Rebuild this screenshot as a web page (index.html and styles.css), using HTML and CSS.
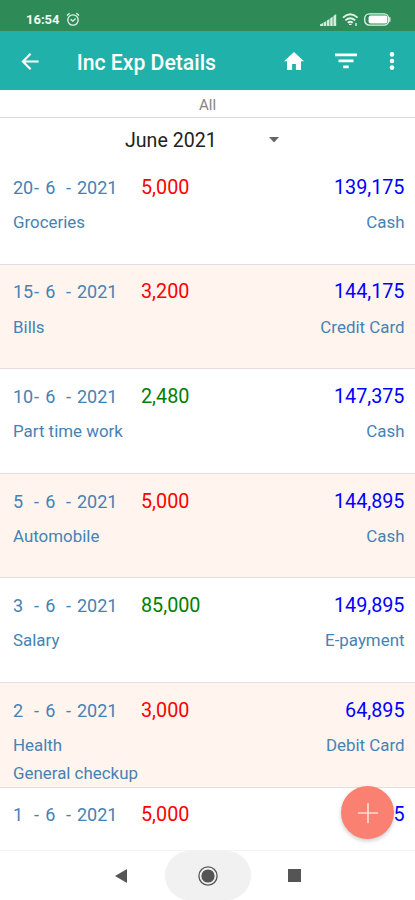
FILE: index.html
```html
<!DOCTYPE html>
<html lang="en">
<head>
    <meta charset="UTF-8">
    <meta name="viewport" content="width=device-width, initial-scale=1.0">
    <title>Inc Exp Details</title>
    <link rel="stylesheet" href="styles.css">
</head>
<body>
    <div class="screen">
        <div class="status-bar">
            <span class="time">16:54</span>
            <svg class="alarm" width="14" height="15" viewBox="0 0 14 15" fill="none" stroke="#e3f3e8" stroke-width="1.3">
                <circle cx="7" cy="8" r="5.2"/>
                <path d="M1 3.6L3.6 1.2M13 3.6L10.4 1.2M4.6 7.2L6.8 9.2L9.6 6.6"/>
            </svg>
            <div class="status-icons">
                <svg width="17" height="12" viewBox="0 0 17 12" fill="#d5ecdc">
                    <path d="M0 12V10.4L3 9V12ZM3.6 12V8.4L6.2 7.2V12ZM6.9 12V6.4L9.5 5V12ZM10.2 12V4.2L12.7 2.8V12ZM13.4 12V2L16.2 0V12Z"/>
                </svg>
                <svg class="wifi" width="17" height="13" viewBox="0 0 17 13" fill="none" stroke="#e3f3e8" stroke-width="1.9">
                    <path d="M1 4.6Q8.2 -2 15.6 4.6M3.4 7.4Q8.2 3 13.2 7.4M5.8 9.8Q8.2 7.6 10.8 9.8"/>
                    <path d="M7 11.4H9.6M14 10V13" stroke-width="1.4"/>
                </svg>
                <svg class="battery" width="27" height="13" viewBox="0 0 27 13">
                    <rect x="0.7" y="0.9" width="24" height="11.2" rx="4.6" fill="none" stroke="#e3f3e8" stroke-width="1.3"/>
                    <rect x="4.6" y="2.6" width="18.8" height="7.8" rx="2" fill="#fff"/>
                    <path d="M25.8 4.2V8.8" stroke="#e3f3e8" stroke-width="1.3"/>
                </svg>
            </div>
        </div>

        <div class="app-bar">
            <svg class="back" width="18" height="17" viewBox="0 0 18 17" fill="none" stroke="#fff" stroke-width="2.1">
                <path d="M17.6 8.5H2M9.6 0.8L1.9 8.5L9.6 16.2"/>
            </svg>
            <h1>Inc Exp Details</h1>
            <svg class="home" width="20" height="18" viewBox="0 0 20 18" fill="#fff">
                <path d="M10 0L20 9.3H17V18H11.9V12H8.1V18H3V9.3H0Z"/>
            </svg>
            <svg class="filter" width="22" height="16" viewBox="0 0 22 16" fill="#fff">
                <path d="M0 0.4H22V3.2H0ZM3.5 6.4H18.5V9.2H3.5ZM8.3 12.4H13.7V15.2H8.3Z"/>
            </svg>
            <svg class="more" width="6" height="18" viewBox="0 0 6 18" fill="#fff">
                <circle cx="3" cy="2.4" r="2.3"/>
                <circle cx="3" cy="9" r="2.3"/>
                <circle cx="3" cy="15.6" r="2.3"/>
            </svg>
        </div>

        <div class="filter-name">All</div>
        <div class="month">
            <span>June 2021</span>
            <svg width="10" height="6" viewBox="0 0 10 6" fill="#666"><path d="M0 0H10L5 5.6Z"/></svg>
        </div>

        <div class="list">
            <div class="row">
                <div class="line">
                    <span class="date"><span class="day">20</span><span class="mon">- 6</span><span class="dash">-</span><span>2021</span></span>
                    <span class="amount expense">5,000</span>
                    <span class="balance">139,175</span>
                </div>
                <div class="info"><span>Groceries</span><span>Cash</span></div>
            </div>
            <div class="row">
                <div class="line">
                    <span class="date"><span class="day">15</span><span class="mon">- 6</span><span class="dash">-</span><span>2021</span></span>
                    <span class="amount expense">3,200</span>
                    <span class="balance">144,175</span>
                </div>
                <div class="info"><span>Bills</span><span>Credit Card</span></div>
            </div>
            <div class="row">
                <div class="line">
                    <span class="date"><span class="day">10</span><span class="mon">- 6</span><span class="dash">-</span><span>2021</span></span>
                    <span class="amount income">2,480</span>
                    <span class="balance">147,375</span>
                </div>
                <div class="info"><span>Part time work</span><span>Cash</span></div>
            </div>
            <div class="row">
                <div class="line">
                    <span class="date"><span class="day">5</span><span class="mon">- 6</span><span class="dash">-</span><span>2021</span></span>
                    <span class="amount expense">5,000</span>
                    <span class="balance">144,895</span>
                </div>
                <div class="info"><span>Automobile</span><span>Cash</span></div>
            </div>
            <div class="row">
                <div class="line">
                    <span class="date"><span class="day">3</span><span class="mon">- 6</span><span class="dash">-</span><span>2021</span></span>
                    <span class="amount income">85,000</span>
                    <span class="balance">149,895</span>
                </div>
                <div class="info"><span>Salary</span><span>E-payment</span></div>
            </div>
            <div class="row">
                <div class="line">
                    <span class="date"><span class="day">2</span><span class="mon">- 6</span><span class="dash">-</span><span>2021</span></span>
                    <span class="amount expense">3,000</span>
                    <span class="balance">64,895</span>
                </div>
                <div class="info"><span>Health</span><span>Debit Card</span></div>
                <div class="note">General checkup</div>
            </div>
            <div class="row">
                <div class="line">
                    <span class="date"><span class="day">1</span><span class="mon">- 6</span><span class="dash">-</span><span>2021</span></span>
                    <span class="amount expense">5,000</span>
                    <span class="balance">67,895</span>
                </div>
            </div>
        </div>

        <button class="fab" aria-label="Add">
            <svg width="20" height="20" viewBox="0 0 20 20" stroke="#ffdcd6" stroke-width="1.7"><path d="M10 0V20M0 10H20"/></svg>
        </button>

        <div class="nav-bar">
            <svg width="13" height="14" viewBox="0 0 13 14" fill="#555"><path d="M12 0V14L0 7Z"/></svg>
            <div class="nav-home">
                <svg width="20" height="20" viewBox="0 0 20 20">
                    <circle cx="10" cy="10" r="9.1" fill="none" stroke="#555" stroke-width="1.3"/>
                    <circle cx="10" cy="10" r="6.6" fill="#555"/>
                </svg>
            </div>
            <svg width="13" height="13" viewBox="0 0 13 13" fill="#555"><rect width="13" height="13"/></svg>
        </div>
    </div>
</body>
</html>
```
FILE: styles.css
```css
* {
    box-sizing: border-box;
}
body {
    font-family: Roboto, 'Liberation Sans', sans-serif;
    background-color: #fff;
    margin: 0;
}
.screen {
    position: relative;
    width: 415px;
    height: 900px;
    display: flex;
    flex-direction: column;
    overflow: hidden;
}
.status-bar {
    height: 31px;
    flex: none;
    background-color: #2e8b57;
    color: #f0faf3;
    display: flex;
    align-items: center;
    padding: 8px 24px 0 26px;
}
.time {
    font-size: 13px;
    font-weight: 700;
}
.alarm {
    margin-left: 6px;
}
.status-icons {
    display: flex;
    align-items: center;
    margin-left: auto;
}
.wifi {
    margin-left: 5px;
}
.battery {
    margin-left: 5px;
}
.app-bar {
    height: 59px;
    flex: none;
    background-color: #20b2aa;
    display: flex;
    align-items: center;
    padding: 1px 20px 0 21px;
}
h1 {
    margin: 0 auto 0 37.7px;
    padding-top: 2px;
    color: #fff;
    font-size: 21.2px;
    font-weight: 500;
    white-space: nowrap;
}
.filter {
    margin-left: 31px;
}
.more {
    margin-left: 32px;
}
.filter-name {
    height: 28px;
    flex: none;
    border-bottom: 1px solid #ddd;
    color: #858585;
    font-size: 15px;
    line-height: 30px;
    text-align: center;
}
.month {
    height: 42px;
    flex: none;
    display: flex;
    align-items: center;
    padding: 2px 0 0 125px;
    color: #222;
    font-size: 19.6px;
}
.month span {
    width: 144px;
}
.list {
    flex: 1;
    min-height: 0;
    overflow: hidden;
}
.row {
    height: 104.6px;
    padding: 15.4px 10.5px 0 13px;
    border-bottom: 1px solid #e4dfdc;
    color: #4682b4;
    font-size: 16.9px;
}
.row:nth-child(even) {
    background-color: #fff5ee;
}
.line {
    height: 24px;
    display: flex;
    align-items: center;
    font-size: 19.8px;
}
.date {
    width: 128px;
    display: flex;
    font-size: 18px;
}
.day {
    width: 21px;
}
.mon {
    width: 32px;
    word-spacing: 1.8px;
}
.dash {
    width: 11px;
}
.expense {
    color: #f00;
}
.income {
    color: #008000;
}
.balance {
    margin-left: auto;
    color: #00f;
}
.info {
    display: flex;
    justify-content: space-between;
    margin-top: 8.6px;
    line-height: 28px;
}
.note {
    line-height: 28px;
}
.fab {
    position: absolute;
    left: 341px;
    top: 786px;
    width: 53px;
    height: 53px;
    padding: 0;
    border: none;
    border-radius: 50%;
    background-color: #fa8072;
    box-shadow: 0 2px 4px rgba(0, 0, 0, 0.2);
    display: flex;
    align-items: center;
    justify-content: center;
}
.nav-bar {
    height: 50px;
    flex: none;
    border-top: 1px solid #f3f3f3;
    display: flex;
    align-items: center;
    justify-content: center;
    gap: 37px;
}
.nav-home {
    width: 86px;
    height: 49px;
    border-radius: 25px;
    background-color: #f1f1f1;
    display: flex;
    align-items: center;
    justify-content: center;
}
```
